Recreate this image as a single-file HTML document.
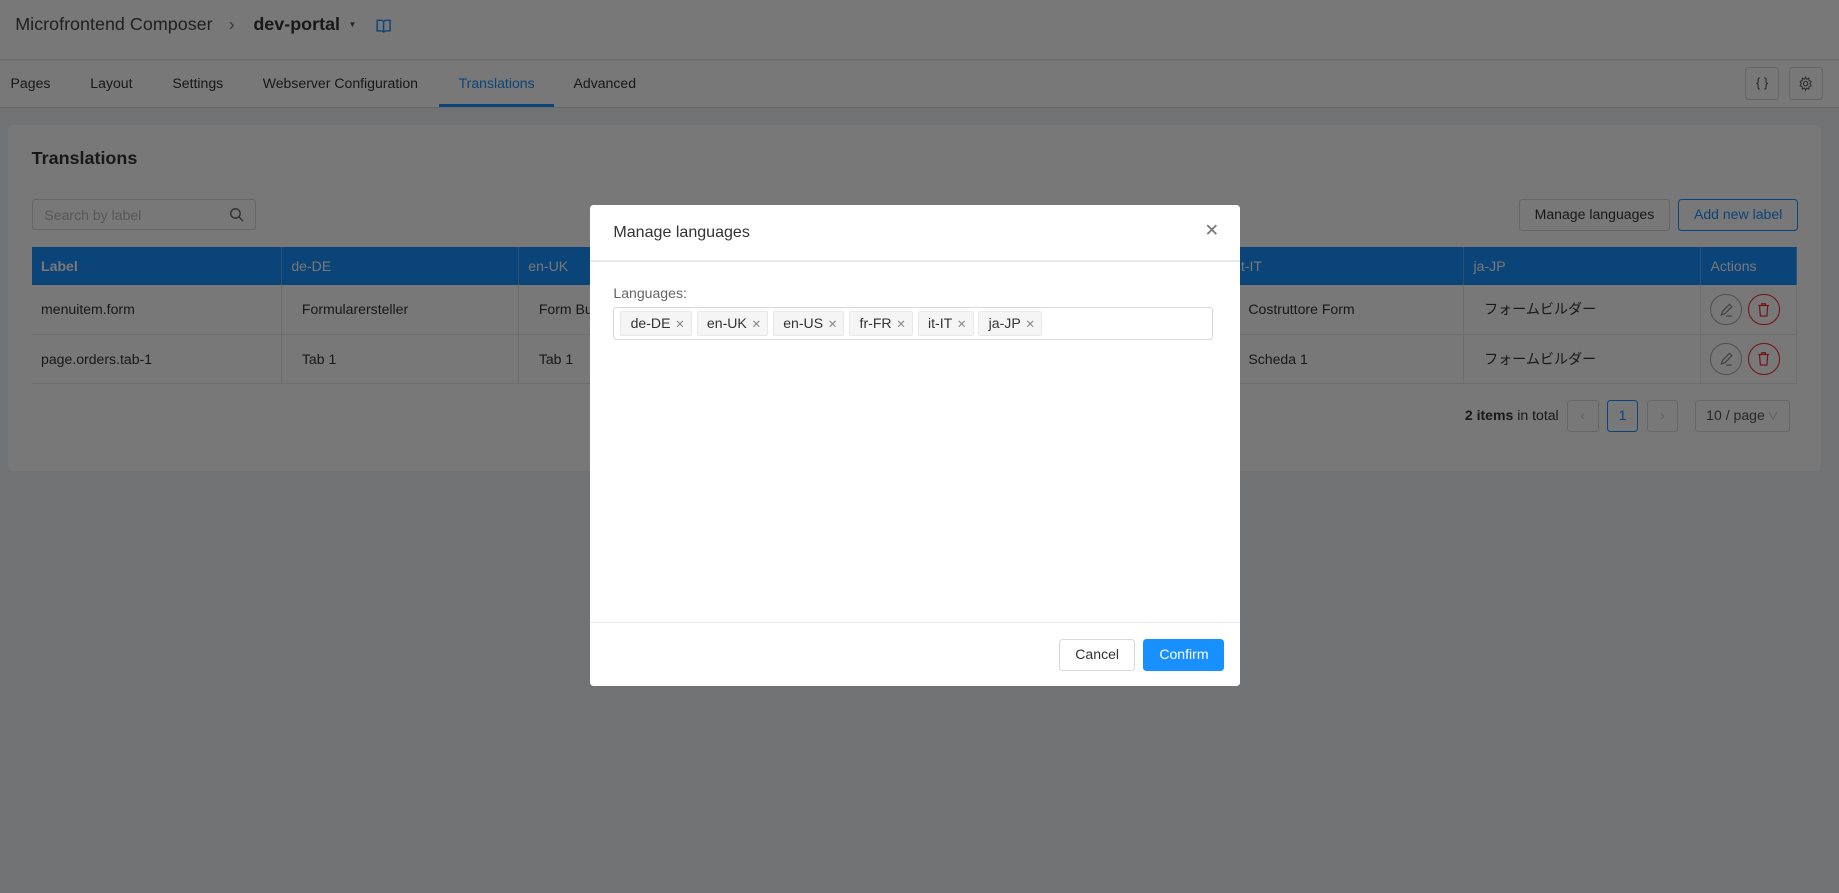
<!DOCTYPE html>
<html><head><meta charset="utf-8"><style>
*{box-sizing:border-box;margin:0;padding:0}
html,body{width:1839px;height:893px;overflow:hidden;background:#fff}
#w{zoom:1.17283;width:1568px;height:761px;position:relative;font-family:"Liberation Sans","Noto Sans CJK JP",sans-serif;font-size:12px;color:#333;background:#f0f2f5}
.a{position:absolute}
.hdr{left:0;top:0;width:1568px;height:51px;background:#fff;border-bottom:1px solid #e8e8e8}
.tabs{left:0;top:52px;width:1568px;height:40px;background:#fff;border-bottom:1px solid #ddd}
.tab{position:absolute;top:12px;font-size:12px;color:#333}
.ib{position:absolute;top:5px;width:29px;height:28px;border:1px solid #d9d9d9;border-radius:3px;background:#fff;text-align:center;line-height:26px;font-size:11px;color:#555}
.card{left:7px;top:107px;width:1546px;height:295px;background:#fff;border-radius:4px}
.btn{position:absolute;height:27px;border:1px solid #d9d9d9;border-radius:3px;background:#fff;text-align:center;line-height:25px;font-size:12px;color:#333}
table{border-collapse:collapse;position:absolute;left:27px;top:211px;width:1505px;table-layout:fixed}
th{background:#1890ff;color:#fff;font-weight:normal;text-align:left;height:32px;padding-left:8px;border-right:1px solid #5aaeff;font-size:12px}
td{height:42px;border-bottom:1px solid #e8e8e8;border-right:1px solid #e8e8e8;padding-left:8px;font-size:12px}
td.p{padding-left:17px}
.cir{display:inline-block;width:27px;height:27px;border-radius:50%;border:1px solid #aaa;vertical-align:middle;margin-right:5px;text-align:center}
.cir svg{margin-top:6px}
.ov{left:0;top:0;width:1568px;height:761px;background:rgba(0,0,0,.53)}
.modal{left:503px;top:175px;width:554px;height:410px;background:#fff;border-radius:3px}
.tag{display:inline-block;height:22px;line-height:20px;border:1px solid #e8e8e8;background:#f5f5f5;border-radius:2px;padding:0 5px 0 8px;margin-right:4px;font-size:12px;color:#333}
.tag i{font-style:normal;color:#888;font-size:10px;margin-left:4px}
</style></head><body><div id="w">
<div class="a hdr">
<div class="a" style="left:13px;top:12px;font-size:15.3px;color:#444">Microfrontend Composer</div>
<div class="a" style="left:195px;top:12px;font-size:15px;color:#777">›</div>
<div class="a" style="left:216px;top:12px;font-size:15.3px;font-weight:bold;color:#333">dev-portal</div>
<div class="a" style="left:297px;top:17px;font-size:7px;color:#555">▼</div>
<svg class="a" style="left:321px;top:15px" width="13" height="13" viewBox="0 0 13 13"><path d="M1 2h4l1.5 1 1.5-1h4v9H8l-1.5 1L5 11H1z M6.5 3v9" fill="none" stroke="#1890ff" stroke-width="1.2"/></svg>
</div>
<div class="a tabs">
<span class="tab" style="left:9px">Pages</span><span class="tab" style="left:77px">Layout</span><span class="tab" style="left:147px">Settings</span><span class="tab" style="left:224px">Webserver Configuration</span><span class="tab" style="left:391px;color:#1890ff">Translations</span><span class="tab" style="left:489px">Advanced</span>
<div class="a" style="left:374px;top:37px;width:98px;height:2px;background:#1890ff"></div>
<div class="ib" style="left:1488px">{ }</div>
<div class="ib" style="left:1525px"><svg width="13" height="13" viewBox="0 0 14 14" style="margin-top:7px"><circle cx="7" cy="7" r="2" fill="none" stroke="#555"/><path d="M7 1l1 2 2-1 0 2 2 1-1 2 1 2-2 1 0 2-2-1-1 2-1-2-2 1 0-2-2-1 1-2-1-2 2-1 0-2 2 1z" fill="none" stroke="#555" stroke-width=".9"/></svg></div>
</div>
<div class="a card"></div>
<div class="a" style="left:27px;top:126px;font-size:15.3px;font-weight:bold;color:#333">Translations</div>
<div class="a" style="left:27px;top:170px;width:191px;height:26px;border:1px solid #d9d9d9;border-radius:3px;background:#fff;padding:6px 10px;color:#bbb">Search by label<svg class="a" style="right:9px;top:6px" width="13" height="13" viewBox="0 0 13 13"><circle cx="5.5" cy="5.5" r="4" fill="none" stroke="#666" stroke-width="1.2"/><path d="M8.5 8.5l3.5 3.5" stroke="#666" stroke-width="1.2"/></svg></div>
<div class="btn" style="left:1295px;top:170px;width:129px">Manage languages</div>
<div class="btn" style="left:1431px;top:170px;width:102px;border-color:#1890ff;color:#1890ff">Add new label</div>
<table><colgroup><col style="width:213px"><col style="width:202px"><col style="width:202px"><col style="width:202px"><col style="width:201px"><col style="width:201px"><col style="width:202px"><col style="width:82px"></colgroup>
<tr><th style="font-weight:bold">Label</th><th>de-DE</th><th>en-UK</th><th>en-US</th><th>fr-FR</th><th>it-IT</th><th>ja-JP</th><th>Actions</th></tr>
<tr><td>menuitem.form</td><td class="p">Formularersteller</td><td class="p">Form Builder</td><td class="p">Form Builder</td><td class="p">Form Builder</td><td class="p">Costruttore Form</td><td class="p">フォームビルダー</td><td><span class="cir"><svg width="13" height="13" viewBox="0 0 13 13"><path d="M2 11l1-3 6-6 2 2-6 6zM6 12h5" fill="none" stroke="#888"/></svg></span><span class="cir" style="border-color:#f5222d"><svg width="13" height="13" viewBox="0 0 13 13"><path d="M2 3h9M5 3V1.5h3V3M3 3l.7 9h5.6L10 3" fill="none" stroke="#f5222d"/></svg></span></td></tr>
<tr><td>page.orders.tab-1</td><td class="p">Tab 1</td><td class="p">Tab 1</td><td class="p">Tab 1</td><td class="p">Tab 1</td><td class="p">Scheda 1</td><td class="p">フォームビルダー</td><td><span class="cir"><svg width="13" height="13" viewBox="0 0 13 13"><path d="M2 11l1-3 6-6 2 2-6 6zM6 12h5" fill="none" stroke="#888"/></svg></span><span class="cir" style="border-color:#f5222d"><svg width="13" height="13" viewBox="0 0 13 13"><path d="M2 3h9M5 3V1.5h3V3M3 3l.7 9h5.6L10 3" fill="none" stroke="#f5222d"/></svg></span></td></tr>
</table>
<div class="a" style="left:1249px;top:347px"><b>2 items</b> in total</div>
<div class="btn" style="left:1336px;top:341px;width:27px;color:#ccc">‹</div>
<div class="btn" style="left:1370px;top:341px;width:27px;border-color:#1890ff;color:#1890ff">1</div>
<div class="btn" style="left:1404px;top:341px;width:27px;color:#ccc">›</div>
<div class="btn" style="left:1445px;top:341px;width:81px;color:#555">10 / page<span style="color:#bbb;font-size:9px"> ∨</span></div>
<div class="a ov"></div>
<div class="a modal">
<div class="a" style="left:20px;top:15px;font-size:13.7px;color:#333">Manage languages</div>
<div class="a" style="left:524px;top:13px;font-size:15px;color:#777">✕</div>
<div class="a" style="left:0;top:47px;width:554px;height:1px;background:#e8e8e8"></div>
<div class="a" style="left:20px;top:68px;color:#666">Languages:</div>
<div class="a" style="left:20px;top:87px;width:511px;height:28px;border:1px solid #d9d9d9;border-radius:3px;padding:2px 5px">
<span class="tag">de-DE<i>✕</i></span><span class="tag">en-UK<i>✕</i></span><span class="tag">en-US<i>✕</i></span><span class="tag">fr-FR<i>✕</i></span><span class="tag">it-IT<i>✕</i></span><span class="tag">ja-JP<i>✕</i></span></div>
<div class="a" style="left:0;top:355px;width:554px;height:1px;background:#e8e8e8"></div>
<div class="btn" style="left:400px;top:370px;width:65px">Cancel</div>
<div class="btn" style="left:472px;top:370px;width:69px;background:#1890ff;border-color:#1890ff;color:#fff">Confirm</div>
</div>
</div></body></html>
